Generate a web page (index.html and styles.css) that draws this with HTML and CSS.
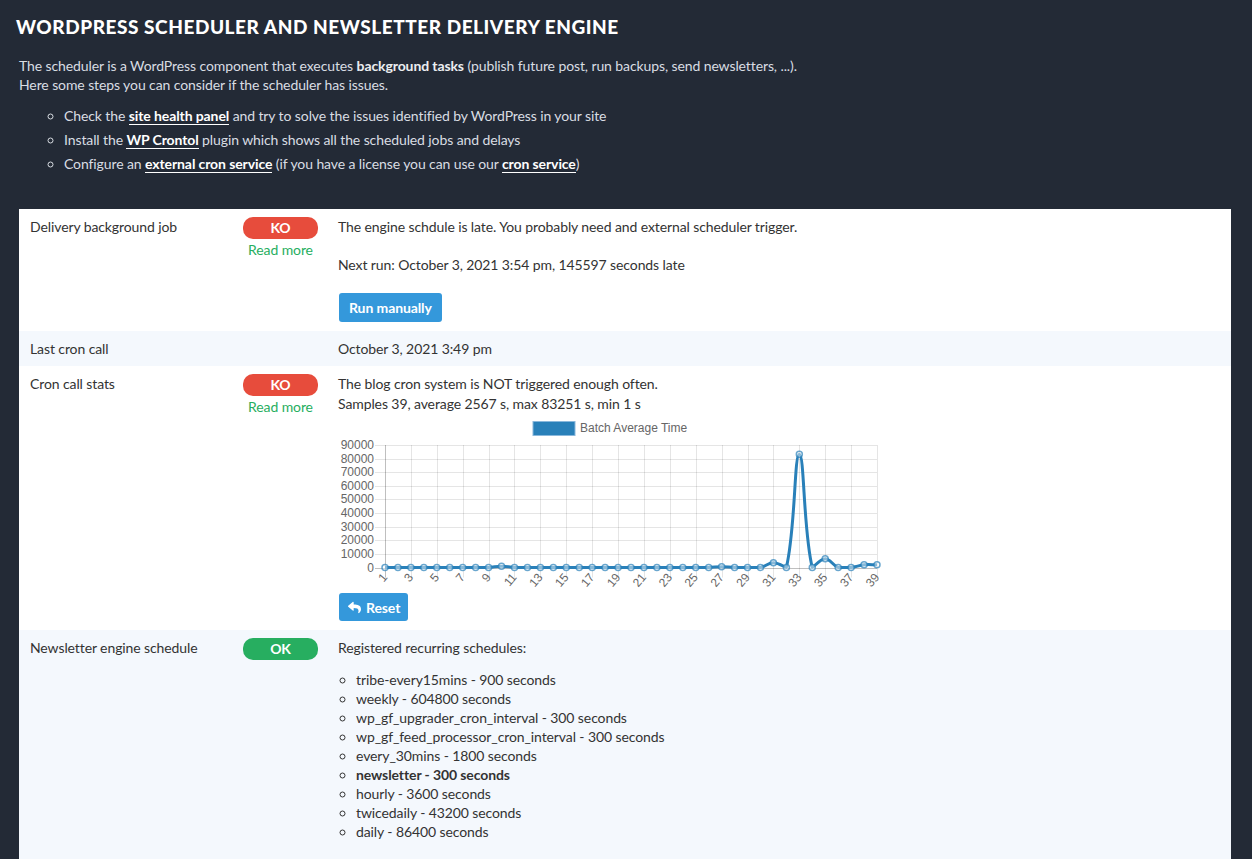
FILE: index.html
```html
<!DOCTYPE html>
<html lang="en">
<head>
<meta charset="utf-8">
<title>Scheduler</title>
<link rel="stylesheet" href="styles.css">
</head>
<body>
<div class="page">
  <header class="intro">
    <h1 class="title">WORDPRESS SCHEDULER AND NEWSLETTER DELIVERY ENGINE</h1>
    <p class="lead">The scheduler is a WordPress component that executes <strong>background tasks</strong> (publish future post, run backups, send newsletters, ...).<br>Here some steps you can consider if the scheduler has issues.</p>
    <ul class="steps">
      <li>Check the <a href="#">site health panel</a> and try to solve the issues identified by WordPress in your site</li>
      <li>Install the <a href="#">WP Crontol</a> plugin which shows all the scheduled jobs and delays</li>
      <li>Configure an <a href="#">external cron service</a> (if you have a license you can use our <a href="#">cron service</a>)</li>
    </ul>
  </header>

  <div class="status-table">
    <div class="row">
      <div class="cell label">Delivery background job</div>
      <div class="cell status">
        <span class="badge ko">KO</span>
        <a class="more" href="#">Read more</a>
      </div>
      <div class="cell content">
        <p class="para">The engine schdule is late. You probably need and external scheduler trigger.</p>
        <p class="para">Next run: October 3, 2021 3:54 pm, 145597 seconds late</p>
        <div class="actions"><button class="btn run">Run manually</button></div>
      </div>
    </div>

    <div class="row alt">
      <div class="cell label">Last cron call</div>
      <div class="cell status"></div>
      <div class="cell content">October 3, 2021 3:49 pm</div>
    </div>

    <div class="row">
      <div class="cell label">Cron call stats</div>
      <div class="cell status">
        <span class="badge ko">KO</span>
        <a class="more" href="#">Read more</a>
      </div>
      <div class="cell content">
        <div>The blog cron system is NOT triggered enough often.</div>
        <div>Samples 39, average 2567 s, max 83251 s, min 1 s</div>
        <svg id="chart" class="chart" width="546" height="179" viewBox="0 0 546 179"></svg>
        <div class="actions"><button class="btn reset"><svg class="reply" viewBox="0 0 512 512" width="13" height="13"><path fill="#fff" d="M8.309 189.836L184.313 37.851C199.719 24.546 224 35.347 224 56.015v80.053c160.629 1.839 288 34.032 288 186.258 0 61.441-39.581 122.309-83.333 154.132-13.653 9.931-33.111-2.533-28.077-18.631 45.344-145.012-21.507-183.51-176.59-185.742V360c0 20.7-24.300 31.453-39.687 18.164l-176.004-152c-11.071-9.562-11.086-26.753 0-36.328z"/></svg>Reset</button></div>
      </div>
    </div>

    <div class="row alt">
      <div class="cell label">Newsletter engine schedule</div>
      <div class="cell status">
        <span class="badge ok">OK</span>
      </div>
      <div class="cell content">
        <div>Registered recurring schedules:</div>
        <ul class="schedules">
          <li>tribe-every15mins - 900 seconds</li>
          <li>weekly - 604800 seconds</li>
          <li>wp_gf_upgrader_cron_interval - 300 seconds</li>
          <li>wp_gf_feed_processor_cron_interval - 300 seconds</li>
          <li>every_30mins - 1800 seconds</li>
          <li class="current">newsletter - 300 seconds</li>
          <li>hourly - 3600 seconds</li>
          <li>twicedaily - 43200 seconds</li>
          <li>daily - 86400 seconds</li>
        </ul>
      </div>
    </div>
  </div>
</div>
<script src="script.js"></script>
</body>
</html>
```

FILE: styles.css
```css
* { box-sizing: border-box; }

html, body {
  margin: 0;
  background: #232a36;
}

body {
  font-family: Lato, "Open Sans", sans-serif;
  font-size: 14px;
  line-height: 20px;
  letter-spacing: -0.1px;
  color: #333;
}

.page {
  padding: 14px 21px 0 19px;
}

.intro {
  color: #d9dde3;
}

.title {
  margin: 0 0 0 -3px;
  font-family: Lato, sans-serif;
  font-weight: 900;
  font-size: 19px;
  line-height: 26px;
  letter-spacing: 0.55px;
  color: #fff;
}

.lead {
  margin: 16px 0 0;
  line-height: 19px;
}

.lead strong {
  color: #eceef1;
  font-weight: 700;
}

.steps {
  margin: 10px 0 0;
  padding-left: 45px;
  list-style: circle;
  line-height: 24px;
}

.steps a {
  color: #fff;
  font-weight: 700;
  text-decoration: none;
  border-bottom: 1px solid #fff;
}

.status-table {
  margin-top: 33px;
  background: #fff;
}

.row {
  display: grid;
  grid-template-columns: 213px 96px 1fr;
  background: #fff;
}

.row.alt {
  background: #f4f8fd;
}

.cell {
  padding: 8px 11px 7px;
}

.status {
  display: flex;
  flex-direction: column;
  align-items: flex-start;
}

.badge {
  display: block;
  width: 75px;
  height: 22px;
  line-height: 22px;
  border-radius: 10px;
  text-align: center;
  color: #fff;
  font-weight: 700;
  font-size: 14px;
}

.badge.ko { background: #e74c3c; }
.badge.ok { background: #27ae60; }

.more {
  display: block;
  width: 75px;
  margin-top: 1px;
  text-align: center;
  color: #27ae60;
  text-decoration: none;
  line-height: 20px;
}

.content {
  padding-left: 10px;
}

.para {
  margin: 0 0 18px;
}

.actions {
  display: flex;
  margin-bottom: 2px;
}

.btn {
  display: flex;
  align-items: center;
  gap: 5px;
  border: 0;
  border-radius: 3px;
  background: #3498db;
  color: #fff;
  font-family: Lato, sans-serif;
  font-weight: 700;
  font-size: 14px;
  letter-spacing: -0.1px;
  padding: 0 10px;
  cursor: pointer;
}

.btn.run {
  height: 29px;
  margin-left: 1px;
}

.btn.reset {
  height: 28px;
  margin-left: 1px;
  padding: 0 8px 0 9px;
}

.reply {
  display: block;
}

.chart {
  display: block;
  margin-left: -1px;
  letter-spacing: 0;
}

.chart text {
  font-family: "Liberation Sans", Arial, sans-serif;
  font-size: 12px;
  fill: #666;
}

.schedules {
  margin: 12px 0 14px;
  padding-left: 18px;
  list-style: circle;
  line-height: 19px;
}

.schedules .current {
  font-weight: 700;
}
```

FILE: script.js
```js
(function () {
  var svg = document.getElementById('chart');
  var NS = 'http://www.w3.org/2000/svg';
  var vals = [];
  for (var n = 0; n < 39; n++) vals.push(60);
  vals[0] = 1; vals[9] = 900; vals[26] = 500; vals[30] = 3500; vals[31] = 60;
  vals[32] = 83251; vals[33] = 1; vals[34] = 6500; vals[37] = 2000; vals[38] = 2000;

  var x0 = 48, x1 = 540, yb = 153.5, yt = 31, max = 90000;
  function X(i) { return x0 + i * (x1 - x0) / 38; }
  function Y(v) { return yb - v * (yb - yt) / max; }
  function el(name, attrs, text) {
    var e = document.createElementNS(NS, name);
    for (var k in attrs) e.setAttribute(k, attrs[k]);
    if (text != null) e.textContent = text;
    svg.appendChild(e);
    return e;
  }

  // legend
  el('rect', { x: 196, y: 7.5, width: 42, height: 14, fill: '#2980b9', stroke: '#8ab8dc', 'stroke-width': 1 });
  el('text', { x: 243, y: 14.5, 'dominant-baseline': 'middle' }, 'Batch Average Time');

  // horizontal grid + y labels
  for (var k = 0; k <= 9; k++) {
    var y = Math.round(Y(k * 10000)) + 0.5;
    el('line', { x1: 38, x2: x1, y1: y, y2: y, stroke: k === 0 ? 'rgba(0,0,0,0.25)' : 'rgba(0,0,0,0.1)', 'stroke-width': 1 });
    el('text', { x: 37, y: y, 'text-anchor': 'end', 'dominant-baseline': 'middle' }, String(k * 10000));
  }
  // vertical grid + x labels
  for (var i = 0; i < 39; i += 2) {
    var x = Math.round(X(i)) + 0.5;
    el('line', { x1: x, x2: x, y1: yt, y2: yb + 10, stroke: i === 0 ? 'rgba(0,0,0,0.25)' : 'rgba(0,0,0,0.1)', 'stroke-width': 1 });
    el('text', { transform: 'translate(' + (X(i) + 0.5) + ',' + (yb + 8) + ') rotate(-50)', 'text-anchor': 'end', 'dominant-baseline': 'middle' }, String(i + 1));
  }

  // spline (chart.js style, tension 0.4)
  var pts = vals.map(function (v, i) { return { x: X(i), y: Y(v) }; });
  var t = 0.4;
  var cps = pts.map(function (p, i) {
    var a = pts[i - 1] || p, b = pts[i + 1] || p;
    var d01 = Math.hypot(p.x - a.x, p.y - a.y), d12 = Math.hypot(b.x - p.x, b.y - p.y);
    var s = d01 + d12 || 1;
    var fa = t * d01 / s, fb = t * d12 / s;
    return {
      prev: { x: p.x - fa * (b.x - a.x), y: Math.min(yb, Math.max(yt, p.y - fa * (b.y - a.y))) },
      next: { x: p.x + fb * (b.x - a.x), y: Math.min(yb, Math.max(yt, p.y + fb * (b.y - a.y))) }
    };
  });
  var d = 'M' + pts[0].x + ' ' + pts[0].y;
  for (var j = 1; j < pts.length; j++) {
    d += ' C' + cps[j - 1].next.x + ' ' + cps[j - 1].next.y + ' ' + cps[j].prev.x + ' ' + cps[j].prev.y + ' ' + pts[j].x + ' ' + pts[j].y;
  }
  el('path', { d: d, fill: 'none', stroke: '#2980b9', 'stroke-width': 3, 'stroke-linejoin': 'round' });
  pts.forEach(function (p) {
    el('circle', { cx: p.x, cy: p.y, r: 3, fill: 'rgba(255,255,255,0.45)', stroke: 'rgba(41,128,185,0.7)', 'stroke-width': 1.5 });
  });
})();
```
